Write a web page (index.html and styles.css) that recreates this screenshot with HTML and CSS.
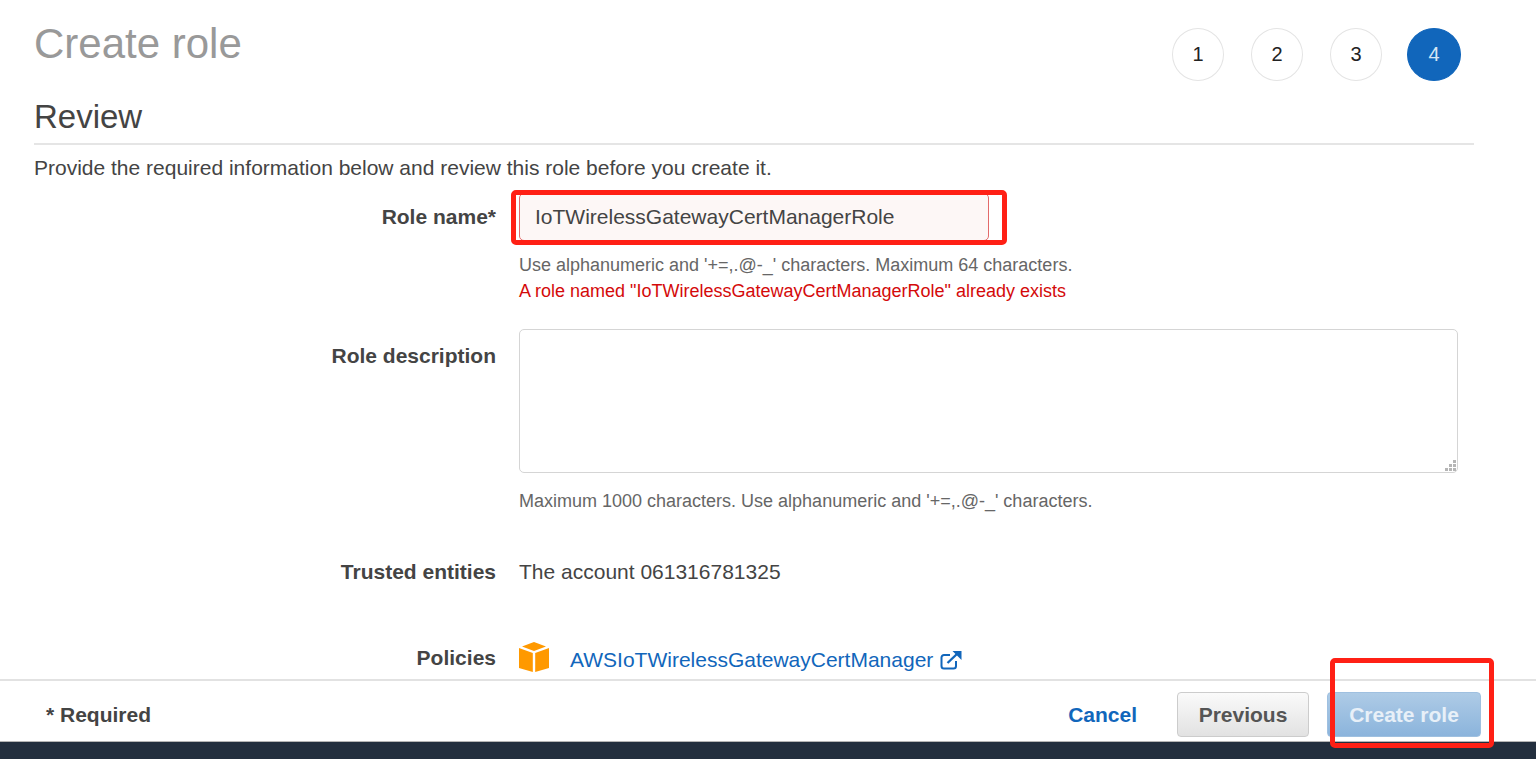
FILE: index.html
```html
<!DOCTYPE html>
<html lang="en">
<head>
<meta charset="utf-8">
<title>Create role</title>
<link rel="stylesheet" href="styles.css">
</head>
<body>
<div class="page">
  <main class="main">
    <header class="top">
      <h1 class="title">Create role</h1>
      <ol class="steps">
        <li class="step">1</li>
        <li class="step">2</li>
        <li class="step">3</li>
        <li class="step step-active">4</li>
      </ol>
    </header>
    <h2 class="section">Review</h2>
    <p class="intro">Provide the required information below and review this role before you create it.</p>
    <div class="form">
      <div class="row row-name">
        <label class="label">Role name*</label>
        <div class="field">
          <div class="name-wrap">
            <input class="input" type="text" value="IoTWirelessGatewayCertManagerRole">
            <span class="mark mark-input"></span>
          </div>
          <p class="hint hint-first">Use alphanumeric and '+=,.@-_' characters. Maximum 64 characters.</p>
          <p class="error">A role named "IoTWirelessGatewayCertManagerRole" already exists</p>
        </div>
      </div>
      <div class="row row-desc">
        <label class="label">Role description</label>
        <div class="field">
          <div class="textarea">
            <svg class="grip" width="12" height="12" viewBox="0 0 12 12" aria-hidden="true"><path fill="#b5b5b5" d="M9 1h3v3H9zM5 5h3v3H5zM9 5h3v3H9zM1 9h3v3H1zM5 9h3v3H5zM9 9h3v3H9z"/></svg>
          </div>
          <p class="hint hint-desc">Maximum 1000 characters. Use alphanumeric and '+=,.@-_' characters.</p>
        </div>
      </div>
      <div class="row row-trusted">
        <span class="label">Trusted entities</span>
        <div class="field value">The account 061316781325</div>
      </div>
      <div class="row row-policies">
        <span class="label">Policies</span>
        <div class="field policy">
          <svg class="cube" width="32" height="32" viewBox="0 0 32 32" aria-hidden="true">
            <path fill="#ff9900" d="M16 1 28 5.500 16 10 4 5.500Z"/>
            <path fill="#ff9900" d="M1 7 14.800 12V31L1 27Z"/>
            <path fill="#ff9900" d="M31 7 17.200 12V31L31 27Z"/>
          </svg>
          <a class="link" href="#">AWSIoTWirelessGatewayCertManager</a>
          <svg class="ext" width="22" height="20" viewBox="0 0 22 20" aria-hidden="true">
            <path fill="none" stroke="#1166bb" stroke-width="2" d="M16 11v5a2.500 2.500 0 0 1-2.500 2.500H4A2.500 2.500 0 0 1 1.500 16V7.500A2.500 2.500 0 0 1 4 5h6"/>
            <path fill="none" stroke="#1166bb" stroke-width="2.400" d="M7.500 13 18 3"/>
            <path fill="#1166bb" d="M12.500 1H21.500V10Z"/>
          </svg>
        </div>
      </div>
    </div>
  </main>
  <footer class="foot">
    <span class="required">* Required</span>
    <div class="actions">
      <a class="cancel" href="#">Cancel</a>
      <button class="btn btn-prev" type="button">Previous</button>
      <div class="create-wrap">
        <button class="btn btn-create" type="button">Create role</button>
        <span class="mark mark-create"></span>
      </div>
    </div>
  </footer>
  <div class="bar"></div>
</div>
</body>
</html>
```
FILE: styles.css
```css
* { box-sizing: border-box; }
html, body { margin: 0; height: 100%; }
body {
  font-family: "Liberation Sans", Arial, sans-serif;
  color: #444;
  background: #fff;
  overflow: hidden;
}
.page { height: 759px; display: flex; flex-direction: column; }
.main { flex: 1; min-height: 0; padding: 0 62px 0 34px; overflow: hidden; }

.top { display: flex; justify-content: space-between; height: 98px; padding: 28px 13px 0 0; }
.title { margin: -4px 0 0; font-size: 42px; line-height: 40px; font-weight: 400; color: #999; }
.steps { list-style: none; display: flex; margin: 0; padding: 0; gap: 27px; }
.step {
  width: 52px; height: 53px; border: 1px solid #e4e4e4; border-radius: 50%;
  display: flex; align-items: center; justify-content: center;
  font-size: 20px; color: #222; background: #fff;
}
.step-active { width: 54px; margin-left: -2px; background: #1166bb; border-color: #1166bb; color: #d5e5f5; }

.section {
  margin: 0; height: 47px; font-size: 33px; line-height: 38px; font-weight: 400;
  color: #444; border-bottom: 2px solid #e5e5e5;
}
.intro { margin: 0; height: 48px; padding-top: 11px; font-size: 21px; line-height: 24px; color: #444; }

.row { display: grid; grid-template-columns: 462px 939px; column-gap: 23px; }
.label { text-align: right; font-size: 21px; line-height: 24px; font-weight: 700; color: #444; }
.row-name { height: 136px; }
.row-name .label { padding-top: 12px; }
.row-desc { height: 231px; }
.row-desc .label { padding-top: 15px; }
.row-trusted { height: 85px; }
.row-policies { height: 30px; }
.row-policies .label { padding-top: 1px; }

.name-wrap { position: relative; width: 470px; height: 48px; }
.input {
  display: block; width: 100%; height: 100%; padding: 0 15px;
  border: 1px solid #e36a6a; border-radius: 5px; background: #fdf7f6;
  font: 21px/24px "Liberation Sans", Arial, sans-serif; color: #444; outline: none;
}
.hint { margin: 0; font-size: 18px; line-height: 20px; color: #666; }
.hint-first { padding-top: 14px; }
.error { margin: 6px 0 0; font-size: 18px; line-height: 20px; color: #d40a0a; }

.textarea {
  position: relative; height: 144px; border: 1px solid #d5d5d5; border-radius: 5px; background: #fff;
}
.grip { position: absolute; right: 1px; bottom: 1px; }
.hint-desc { padding-top: 18px; }

.value { font-size: 21px; line-height: 24px; color: #444; }

.policy { display: flex; align-items: flex-start; margin-top: -4px; margin-left: -1px; }
.cube { flex: none; }
.link { margin: 7px 0 0 20px; font-size: 21px; line-height: 24px; color: #1166bb; text-decoration: none; }
.ext { flex: none; margin: 9px 0 0 7px; }

.foot {
  flex: none; height: 62px; display: flex; align-items: center; justify-content: space-between;
  padding: 7px 55px 0 46px; border-top: 2px solid #e2e2e2; background: #fff;
}
.required { font-size: 21px; font-weight: 700; color: #444; }
.actions { display: flex; align-items: center; }
.cancel { font-size: 21px; font-weight: 700; color: #1166bb; text-decoration: none; margin-right: 40px; }
.btn {
  height: 45px; border-radius: 4px; font: 700 21px "Liberation Sans", Arial, sans-serif; padding: 0;
}
.btn-prev {
  width: 132px; margin-right: 18px; color: #555;
  border: 1px solid #ccc; background: linear-gradient(#fafafa, #e2e2e2);
}
.create-wrap { position: relative; }
.btn-create {
  display: block; width: 154px; color: #e8f0f8; border: 1px solid #9fc0e0;
  background: linear-gradient(#aecbe6, #8bb4dc);
}
.bar { flex: none; height: 18px; background: #232f3e; border-top: 1px solid #b5b5b5; }

.mark { position: absolute; border: 5px solid #ff2015; border-radius: 5px; pointer-events: none; }
.mark-input { left: -8px; top: -3px; width: 496px; height: 55px; }
.mark-create { left: 3px; top: -34px; width: 164px; height: 90px; }
```
